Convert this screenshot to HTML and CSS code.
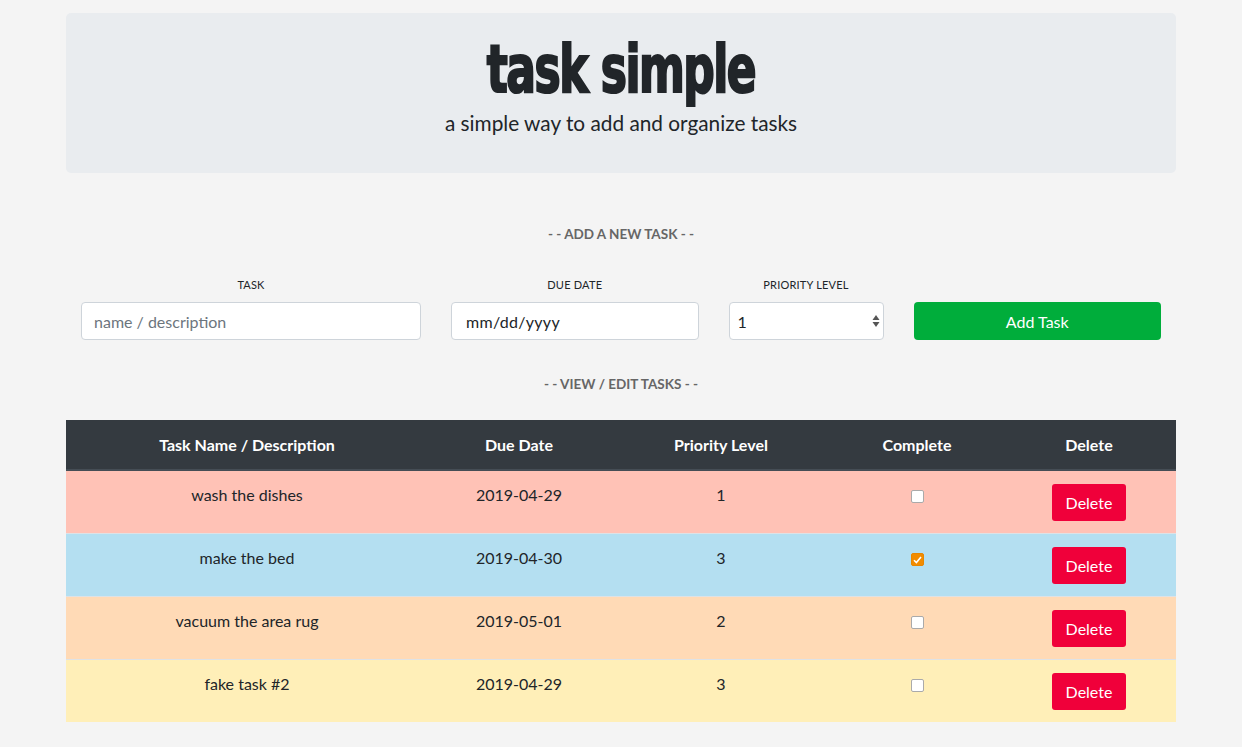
FILE: index.html
```html
<!DOCTYPE html>
<html>
<head>
<meta charset="utf-8">
<title>task simple</title>
<link rel="stylesheet" href="styles.css">
</head>
<body>
<div class="container">
  <header class="jumbotron">
    <h1 class="title">task simple</h1>
    <p class="lead">a simple way to add and organize tasks</p>
  </header>

  <h6 class="section-head add-head">- - ADD A NEW TASK - -</h6>

  <form class="task-form">
    <div class="col col-4">
      <label class="label">TASK</label>
      <input class="field" type="text" placeholder="name / description">
    </div>
    <div class="col col-3">
      <label class="label">DUE DATE</label>
      <div class="field date">mm/dd/yyyy</div>
    </div>
    <div class="col col-2">
      <label class="label">PRIORITY LEVEL</label>
      <div class="select-wrap">
        <div class="field select">1</div>
        <svg class="spin" width="8" height="14" viewBox="0 0 8 14"><path d="M4 1 L7.5 6 L0.5 6 Z" fill="#555"/><path d="M4 13 L7.5 8 L0.5 8 Z" fill="#555"/></svg>
      </div>
    </div>
    <div class="col col-3">
      <label class="label">&nbsp;</label>
      <button type="button" class="btn-add">Add Task</button>
    </div>
  </form>

  <h6 class="section-head view-head">- - VIEW / EDIT TASKS - -</h6>

  <table class="tasks">
    <thead>
      <tr>
        <th class="c1">Task Name / Description</th>
        <th class="c2">Due Date</th>
        <th class="c3">Priority Level</th>
        <th class="c4">Complete</th>
        <th class="c5">Delete</th>
      </tr>
    </thead>
    <tbody>
      <tr class="p1">
        <td>wash the dishes</td><td>2019-04-29</td><td>1</td>
        <td><span class="check"></span></td>
        <td><button type="button" class="btn-del">Delete</button></td>
      </tr>
      <tr class="p3">
        <td>make the bed</td><td>2019-04-30</td><td>3</td>
        <td><span class="check checked"><svg width="9" height="8" viewBox="0 0 9 8"><path d="M1 4.2 L3.4 6.6 L8 1" stroke="#fff" stroke-width="1.6" fill="none"/></svg></span></td>
        <td><button type="button" class="btn-del">Delete</button></td>
      </tr>
      <tr class="p2">
        <td>vacuum the area rug</td><td>2019-05-01</td><td>2</td>
        <td><span class="check"></span></td>
        <td><button type="button" class="btn-del">Delete</button></td>
      </tr>
      <tr class="p4">
        <td>fake task #2</td><td>2019-04-29</td><td>3</td>
        <td><span class="check"></span></td>
        <td><button type="button" class="btn-del">Delete</button></td>
      </tr>
    </tbody>
  </table>
</div>
</body>
</html>
```
FILE: styles.css
```css
* { box-sizing: border-box; }
html, body { margin: 0; padding: 0; }
body {
  background: #f4f4f4;
  color: #212529;
  font-family: "Lato", "DejaVu Sans", sans-serif;
  font-size: 16px;
}
.container {
  width: 1110px;
  margin: 0 auto;
  padding-top: 13px;
}
.jumbotron {
  background: #e9ecef;
  border-radius: 5px;
  height: 160px;
  text-align: center;
  padding-top: 24px;
}
.title {
  margin: 0;
  font-family: "DejaVu Sans Condensed", "Liberation Sans Narrow", sans-serif;
  font-weight: 700;
  font-size: 66px;
  line-height: 66px;
  letter-spacing: -2px;
  -webkit-text-stroke: 2.2px #212529;
  color: #212529;
  transform: scaleX(0.74);
}
.lead {
  margin: 8px 0 0;
  font-size: 20.8px;
  line-height: 24px;
  font-weight: 400;
}
.section-head {
  margin: 0;
  text-align: center;
  font-size: 13.5px;
  font-weight: 700;
  color: #666;
  line-height: 16px;
}
.add-head { margin-top: 53px; }
.view-head { margin-top: 36px; }
.task-form {
  display: flex;
  margin-top: 36px;
}
.col { padding: 0 15px; display: flex; flex-direction: column; align-items: stretch; }
.col-4 { width: 370px; }
.col-3 { width: 277.5px; }
.col-2 { width: 185px; }
.label {
  text-align: center;
  font-size: 11px;
  line-height: 13px;
  height: 13px;
  margin-bottom: 11px;
  color: #212529;
  letter-spacing: 0.2px;
}
.field {
  height: 38px;
  border: 1px solid #ced4da;
  border-radius: 4px;
  background: #fff;
  font-family: "Lato", "DejaVu Sans", sans-serif;
  font-size: 16px;
  padding: 0 12px;
  color: #212529;
  display: flex;
  align-items: center;
}
.field::placeholder { color: #6c757d; }
.date { padding-left: 14px; letter-spacing: 0.3px; }
.select-wrap { position: relative; }
.select { padding-left: 8px; }
.spin { position: absolute; right: 4px; top: 12px; }
.btn-add {
  height: 38px;
  border: 0;
  border-radius: 4px;
  background: #00ad3b;
  color: #fff;
  font-family: "Lato", "DejaVu Sans", sans-serif;
  font-size: 16px;
}
.tasks {
  width: 1110px;
  margin-top: 28px;
  border-collapse: collapse;
  table-layout: fixed;
  text-align: center;
}
.tasks th {
  background: #343a40;
  color: #fff;
  font-weight: 700;
  font-size: 16px;
  height: 50px;
  border-bottom: 2px solid #454d55;
  padding: 0 12px;
}
.c1 { width: 362px; }
.c2 { width: 182px; }
.c3 { width: 222px; }
.c4 { width: 170px; }
.c5 { width: 174px; }
.tasks td {
  height: 63px;
  padding: 13px 12px 0;
  vertical-align: top;
  border-top: 1px solid #dee2e6;
  font-size: 16px;
  line-height: 22px;
}
.tasks tbody tr:first-child td { border-top: 0; }
.p1 { background: #ffc2b6; }
.p3 { background: #b4dff1; }
.p2 { background: #ffdab6; }
.p4 { background: #ffefb8; }
.check {
  display: inline-block;
  width: 13px;
  height: 13px;
  margin-top: 6px;
  background: #fff;
  border: 1px solid #aaa;
  border-radius: 2px;
  vertical-align: top;
  position: relative;
}
.check.checked {
  background: #f28c00;
  border-color: #e88600;
}
.check svg { position: absolute; left: 1px; top: 2px; }
.btn-del {
  margin-top: 0;
  height: 37px;
  width: 74px;
  border: 0;
  border-radius: 3px;
  background: #f0003a;
  color: #fff;
  font-family: "Lato", "DejaVu Sans", sans-serif;
  font-size: 16px;
}
```
